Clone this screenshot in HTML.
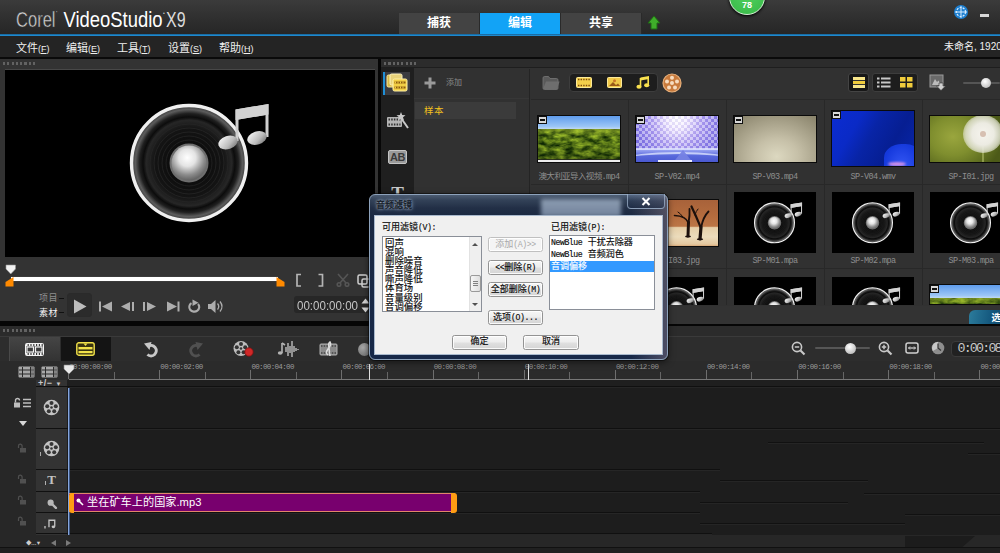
<!DOCTYPE html>
<html lang="zh-CN">
<head>
<meta charset="utf-8">
<title>Corel VideoStudio X9</title>
<style>
*{box-sizing:border-box;margin:0;padding:0}
html,body{width:1000px;height:553px;overflow:hidden;background:#1c1c1c}
body{position:relative;font-family:"Liberation Sans","Noto Sans CJK SC",sans-serif;color:#ddd;font-size:11px}
.a{position:absolute}
.nw{white-space:nowrap}
#titlebar{left:0;top:0;width:1000px;height:34px;background:linear-gradient(#3b3b3b,#303030 50%,#262626)}
#blueline{left:0;top:34px;width:1000px;height:3px;background:linear-gradient(#154f78,#1e8ad0 33%,#1e88cc 62%,#0f3a5a)}
#menubar{left:0;top:36px;width:1000px;height:21px;background:#242424}
#menugap{left:0;top:57px;width:1000px;height:2px;background:#0a0a0a}
.logo{left:15px;top:4px;font-size:21px;letter-spacing:-0.9px;color:#ececec;white-space:nowrap}
.logo b{font-weight:normal;color:#fff}
  .menu{top:39px;font-size:11px;color:#f0f0f0;white-space:nowrap}
.menu i{font-style:normal;font-size:9px}
.tab{top:13px;height:21px;width:81px;text-align:center;line-height:20px;font-size:12px;font-weight:bold;color:#fff;background:#434343;border-right:1px solid #2a2a2a}
.tab.sel{background:#12a3f6}
.dots{height:3px;width:34px;background:repeating-linear-gradient(90deg,#626262 0 2.2px,transparent 2.2px 4.3px)}
.lbl{font-family:"Liberation Mono","Noto Sans CJK SC",monospace;font-size:8.5px;line-height:10px;letter-spacing:-0.6px;color:#8e8e8e;text-align:center;white-space:nowrap;width:98px}
.thumb{border:1px solid #0a0a0a;overflow:hidden}
.vsep{width:1px;background:#282828}
.hsep{height:1px;background:#282828}
</style>
</head>
<body>
<div id="titlebar" class="a"></div><div id="blueline" class="a"></div><div id="menubar" class="a"></div><div id="menugap" class="a"></div>
<svg class="a" style="left:0;top:0" width="200" height="34" font-family="Liberation Sans, sans-serif" font-size="22"><text x="16" y="26.5" fill="#d6d6d6" textLength="39.5" lengthAdjust="spacingAndGlyphs" stroke="#3a3a3a" stroke-width="0.5">Corel</text><text x="56" y="15" fill="#ccc" font-size="6">&#8217;</text><text x="63.5" y="26.5" fill="#ffffff" textLength="99" lengthAdjust="spacingAndGlyphs">VideoStudio</text><text x="163" y="15" fill="#ccc" font-size="5">&#8226;</text><text x="166" y="26.5" fill="#dcdcdc" textLength="19.5" lengthAdjust="spacingAndGlyphs">X9</text></svg>
<div class="a menu" style="left:16px">文件<i>(<u>F</u>)</i></div>
<div class="a menu" style="left:66px">编辑<i>(<u>E</u>)</i></div>
<div class="a menu" style="left:117px">工具<i>(<u>T</u>)</i></div>
<div class="a menu" style="left:168px">设置<i>(<u>S</u>)</i></div>
<div class="a menu" style="left:219px">帮助<i>(<u>H</u>)</i></div>
<div class="a tab" style="left:399px">捕获</div>
<div class="a tab sel" style="left:480px">编辑</div>
<div class="a tab" style="left:561px">共享</div>
<svg class="a" style="left:647px;top:15px" width="14" height="16" viewBox="0 0 14 16"><path d="M7 1 L13 8 H10 V14 H4 V8 H1 Z" fill="#3fae2a" stroke="#1f6a14" stroke-width="1"/></svg>
<div class="a" style="left:729px;top:-21px;width:36px;height:36px;border-radius:50%;background:radial-gradient(circle at 50% 40%,#52d060,#36b846);border:1.5px solid #d4f0d4;box-shadow:0 1px 3px #000"></div>
<div class="a" style="left:729px;top:0px;width:36px;text-align:center;font-size:9px;font-weight:bold;color:#fff;line-height:10px">78</div>
<svg class="a" style="left:953px;top:4px" width="16" height="16" viewBox="0 0 16 16"><circle cx="8" cy="8" r="7" fill="#1d7fd0"/><circle cx="8" cy="8" r="4.5" fill="none" stroke="#d8ecff" stroke-width="1.2" stroke-dasharray="2 1.2"/><path d="M8 2V14M2 8H14" stroke="#d8ecff" stroke-width="1"/></svg>
<div class="a" style="left:980px;top:14px;width:9px;height:3px;background:#d8d8d8"></div>
<div class="a nw" style="left:944px;top:40px;font-size:10px;line-height:14px;color:#f0f0f0">未命名, 1920</div>
<div class="a" style="left:0;top:59px;width:378px;height:262.5px;background:#333"></div>
<div class="a dots" style="left:3px;top:62px"></div>
<div class="a" style="left:5px;top:69px;width:370px;height:188px;background:#000;border-top:1px solid #484848"></div>
<svg class="a" style="left:127px;top:100px" width="150" height="125" viewBox="0 0 150 125">
<defs>
<radialGradient id="sgA" cx="50%" cy="50%" r="50%"><stop offset="0" stop-color="#050505"/><stop offset="0.6" stop-color="#141414"/><stop offset="0.74" stop-color="#262626"/><stop offset="0.8" stop-color="#0c0c0c"/><stop offset="0.86" stop-color="#202020"/><stop offset="0.93" stop-color="#5c5c5c"/><stop offset="1" stop-color="#3a3a3a"/></radialGradient>
<radialGradient id="bgA" cx="45%" cy="35%" r="70%"><stop offset="0" stop-color="#ffffff"/><stop offset="0.35" stop-color="#e4e4e4"/><stop offset="0.7" stop-color="#8c8c8c"/><stop offset="1" stop-color="#555"/></radialGradient>
<linearGradient id="ngA" x1="0" y1="0" x2="1" y2="1"><stop offset="0" stop-color="#fff"/><stop offset="0.6" stop-color="#bbb"/><stop offset="1" stop-color="#666"/></linearGradient>
</defs>
<circle cx="62" cy="63" r="57.5" fill="url(#sgA)" stroke="#f0f0f0" stroke-width="3.4"/>
<circle cx="62" cy="63" r="43" fill="none" stroke="#262626" stroke-width="1"/>
<circle cx="62" cy="63" r="39" fill="none" stroke="#242424" stroke-width="1"/>
<circle cx="62" cy="63" r="35" fill="none" stroke="#232323" stroke-width="1"/>
<circle cx="62" cy="63" r="31" fill="none" stroke="#222" stroke-width="1"/>
<circle cx="62" cy="63" r="27" fill="none" stroke="#212121" stroke-width="1"/>
<circle cx="62" cy="63" r="23" fill="none" stroke="#202020" stroke-width="1"/>
<circle cx="62" cy="63" r="19.5" fill="#6e6e6e"/>
<circle cx="62" cy="63" r="17.5" fill="url(#bgA)"/>
<path d="M108.5 9.5 L141.5 4 L141.5 37 L138.5 37 L138.5 15 L111.5 19.5 L111.5 41 L108.5 41 Z" fill="#cfcfcf"/>
<path d="M108.5 9.5 L141.5 4 L141.5 14.5 L108.5 20 Z" fill="#d2d2d2"/>
<ellipse cx="101" cy="42.5" rx="10" ry="6.5" transform="rotate(-18 101 42.5)" fill="url(#ngA)"/>
<ellipse cx="130" cy="38" rx="10" ry="6.5" transform="rotate(-18 130 38)" fill="url(#ngA)"/>
</svg>
<svg class="a" style="left:5px;top:264px" width="12" height="11" viewBox="0 0 12 11"><path d="M1 1 H10.5 V5 L5.75 10 L1 5 Z" fill="#f2f2f2" stroke="#999" stroke-width="0.6"/></svg>
<div class="a" style="left:11px;top:276.5px;width:267px;height:4px;background:#fff;box-shadow:0 0 1px #888"></div>
<svg class="a" style="left:5px;top:277px" width="9" height="10" viewBox="0 0 9 10"><path d="M8.5 0 V9.5 H0.5 V5 Z" fill="#ff8a00"/></svg>
<svg class="a" style="left:276px;top:277px" width="9" height="10" viewBox="0 0 9 10"><path d="M0.5 0 V9.5 H8.5 V5 Z" fill="#ff8a00"/></svg>
<svg class="a" style="left:295px;top:273px" width="30" height="15" viewBox="0 0 30 15" fill="none" stroke="#b4b4b4" stroke-width="1.7"><path d="M6 1.5 H2 V13 H6"/><path d="M23.5 1.5 H27.5 V13 H23.5"/></svg>
<svg class="a" style="left:336px;top:273px" width="14" height="14" viewBox="0 0 14 14" fill="none" stroke="#555" stroke-width="1.6"><path d="M2 1 L10 10 M12 1 L4 10"/><circle cx="3" cy="11.5" r="1.8"/><circle cx="11" cy="11.5" r="1.8"/></svg>
<svg class="a" style="left:357px;top:273.5px" width="14" height="14" viewBox="0 0 14 14" fill="none" stroke="#cfcfcf" stroke-width="1.5"><rect x="1" y="1" width="9" height="9" rx="1.5"/><rect x="5" y="5" width="8" height="8" rx="1.5"/></svg>
<div class="a nw" style="left:39px;top:292.3px;font-size:9px;color:#8f8f8f;line-height:12px;letter-spacing:0.5px">项目</div>
<div class="a nw" style="left:39px;top:306.5px;font-size:9px;color:#f4f4f4;line-height:12px;letter-spacing:0.5px">素材</div>
<div class="a" style="left:59px;top:298px;width:5px;height:1px;background:#111"></div><div class="a" style="left:59px;top:312px;width:5px;height:1px;background:#111"></div>
<div class="a" style="left:67px;top:293px;width:25px;height:24px;background:#2b2b2b;border-radius:3px;border:1px solid #2a2a2a"></div>
<svg class="a" style="left:67px;top:293.5px" width="160" height="24" viewBox="0 0 160 24" fill="#adadad"><path d="M7 5.5 L19.5 12.5 L7 19.5 Z" fill="#bcbcbc"/><rect x="32" y="7.5" width="2" height="10"/><path d="M45 7.5 V17.5 L35 12.5 Z"/><path d="M63 8 V17 L54 12.5 Z"/><rect x="65" y="8" width="2" height="9"/><rect x="76" y="8" width="2" height="9"/><path d="M80 8 V17 L89 12.5 Z"/><path d="M100 7.5 V17.5 L110 12.5 Z"/><rect x="110.500" y="7.500" width="2" height="10"/><path d="M124.500 9.200 A5 4.600 0 1 0 131 10" fill="none" stroke="#adadad" stroke-width="2.100"/><path d="M125.500 5.500 L131.500 8.800 L125.500 12 Z"/><path d="M141 10 H144 L148.500 6 V19 L144 15 H141 Z"/><path d="M150.500 9.500 Q153 12.500 150.500 15.500" fill="none" stroke="#adadad" stroke-width="1.300"/><path d="M153 7.500 Q157 12.500 153 17.500" fill="none" stroke="#adadad" stroke-width="1.300"/></svg>
<div class="a" style="left:294px;top:296px;width:76px;height:17px;background:#272727;border-radius:3px"></div>
<div class="a nw" style="left:297px;top:298px;font-size:13.5px;color:#c4c4c4;line-height:15px;transform-origin:0 0;transform:scaleX(0.855)">00:00:00:00</div>
<svg class="a" style="left:361px;top:298px" width="9" height="15" viewBox="0 0 9 15" fill="#d8d8d8"><path d="M4.5 0.5 L8.5 5.5 H0.5 Z"/><path d="M4.5 14.5 L8.5 9.5 H0.5 Z"/></svg>
<div class="a" style="left:378px;top:59px;width:3px;height:267px;background:#060606"></div>
<div class="a" style="left:0;top:321px;width:1000px;height:5px;background:#060606"></div>
<div class="a" style="left:381px;top:59px;width:619px;height:262px;background:#313131"></div>
<div class="a" style="left:381px;top:59px;width:619px;height:9px;background:#2c2c2c;border-bottom:1px solid #1e1e1e"></div>
<div class="a dots" style="left:384px;top:62px"></div>
<div class="a" style="left:381px;top:68px;width:33px;height:255px;background:#1f1f1f"></div>
<div class="a" style="left:385px;top:72px;width:25px;height:23px;background:#3b3b3f"></div>
<div class="a" style="left:383px;top:72px;width:2px;height:23px;background:#1f8fd6"></div>
<svg class="a" style="left:386px;top:73px" width="22" height="20" viewBox="0 0 22 20"><rect x="1" y="2" width="13" height="12" rx="1.5" fill="#d9b945" stroke="#f7e9a0" stroke-width="1"/><rect x="4" y="1" width="12" height="11" rx="1.5" fill="#e8d27a" stroke="#fdf3c0" stroke-width="1"/><rect x="7" y="6" width="14" height="12" rx="1.5" fill="#f2cf45" stroke="#fff0a8" stroke-width="1"/><rect x="8.5" y="8.5" width="11" height="2" fill="#8a5a10"/><rect x="8.5" y="13.5" width="11" height="2" fill="#8a5a10"/><path d="M9 9.5h10M9 14.5h10" stroke="#f2cf45" stroke-width="2" stroke-dasharray="1 1.5"/></svg>
<svg class="a" style="left:386px;top:111px" width="24" height="19" viewBox="0 0 24 19"><rect x="1" y="6" width="15" height="10" rx="1" fill="#b4b4b4"/><path d="M2.5 8.5h12M2.5 13.5h12" stroke="#333" stroke-width="2" stroke-dasharray="1.5 1.2"/><path d="M15 7 L22 17" stroke="#c8c8c8" stroke-width="2"/><path d="M15 1 L16.2 4 L19.5 4.2 L17 6.3 L18 9.5 L15 7.7 L12 9.5 L13 6.3 L10.5 4.2 L13.8 4 Z" fill="#c9c9c9"/></svg>
<div class="a" style="left:388px;top:150px;width:19px;height:14px;background:#9a9a9a;border-radius:2px;border:1px solid #c4c4c4"></div><div class="a nw" style="left:388px;top:150px;width:19px;height:14px;text-align:center;line-height:14px;font-size:11px;font-weight:bold;color:#3a3a3a;letter-spacing:-0.5px">AB</div>
<div class="a nw" style="left:389px;top:184px;width:17px;text-align:center;font-size:19px;font-weight:bold;font-family:'Liberation Serif',serif;color:#c8c8c8;line-height:20px">T</div>
<div class="a" style="left:414px;top:69px;width:115px;height:254px;background:#313131"></div>
<div class="a" style="left:414px;top:98px;width:115px;height:1px;background:#373737"></div>
<svg class="a" style="left:424px;top:77px" width="12" height="12" viewBox="0 0 12 12"><path d="M4.5 0.5h3v4h4v3h-4v4h-3v-4h-4v-3h4z" fill="#9a9a9a"/></svg>
<div class="a nw" style="left:446px;top:78px;font-size:8px;color:#8a8a8a;line-height:10px">添加</div>
<div class="a" style="left:415px;top:102px;width:101px;height:17px;background:#3b3b3b"></div>
<div class="a nw" style="left:424px;top:104px;font-size:9.5px;color:#f2c01e;line-height:13px;letter-spacing:0.5px">样本</div>
<div class="a" style="left:529px;top:69px;width:1px;height:254px;background:#242424"></div>
<svg class="a" style="left:542px;top:75px" width="18" height="16" viewBox="0 0 18 16"><path d="M1 3 Q1 1.5 2.5 1.5 H6.5 L8 3.5 H14.5 Q16 3.5 16 5 V13 Q16 14.5 14.5 14.5 H2.5 Q1 14.5 1 13 Z" fill="#5a5a5a" stroke="#777" stroke-width="0.8"/><path d="M1 14 L4 6.5 H17.5 L15 14.5 Z" fill="#6e6e6e"/></svg>
<div class="a" style="left:569px;top:73px;width:89px;height:19px;background:#1d1d1d;border:1px solid #3d3d3d;border-radius:4px"></div>
<svg class="a" style="left:576px;top:77px" width="16" height="11" viewBox="0 0 16 11"><rect x="0.5" y="0.5" width="15" height="10" rx="1" fill="#f3cf4a" stroke="#fbe99a"/><path d="M2 2.5h12M2 8.5h12" stroke="#7a4a10" stroke-width="1.6" stroke-dasharray="1.4 1.2"/></svg>
<svg class="a" style="left:607px;top:77px" width="15" height="11" viewBox="0 0 15 11"><rect x="0.5" y="0.5" width="14" height="10" rx="1" fill="#f0c848" stroke="#fbe99a"/><path d="M2 9 L6 5 L9 8 L11 6.5 L13 9 Z" fill="#9a5a18"/><circle cx="7.5" cy="3.8" r="1.5" fill="#c8782a"/></svg>
<svg class="a" style="left:636px;top:75px" width="15" height="15" viewBox="0 0 15 15"><path d="M4.5 2.5 L13 1 V4 L4.5 5.5 Z" fill="#f8e04e"/><path d="M4.5 3 V11.5 M12.2 2 V10" stroke="#f8e04e" stroke-width="1.6" fill="none"/><ellipse cx="3" cy="11.8" rx="2.6" ry="2" fill="#f8e04e"/><ellipse cx="10.7" cy="10.3" rx="2.6" ry="2" fill="#f8e04e"/></svg>
<svg class="a" style="left:662px;top:73px" width="20" height="20" viewBox="0 0 20 20"><circle cx="10" cy="10" r="9" fill="#c87a3c" stroke="#e9b07a" stroke-width="1.2"/><circle cx="10" cy="10" r="2" fill="#f6dcc0"/><circle cx="10" cy="4.7" r="2" fill="#f6dcc0"/><circle cx="5" cy="8.5" r="2" fill="#f6dcc0"/><circle cx="15" cy="8.5" r="2" fill="#f6dcc0"/><circle cx="7" cy="14.5" r="2" fill="#f6dcc0"/><circle cx="13" cy="14.5" r="2" fill="#f6dcc0"/></svg>
<div class="a" style="left:848px;top:73px;width:21px;height:19px;background:#171717;border:1px solid #444;border-radius:3px"></div>
<div class="a" style="left:853px;top:77px;width:12px;height:11px;background:#f0cc3c;border-top:3px solid #f8e68a;border-bottom:3px solid #f8e68a"></div><div class="a" style="left:853px;top:80px;width:12px;height:1px;background:#333"></div><div class="a" style="left:853px;top:84px;width:12px;height:1px;background:#333"></div>
<div class="a" style="left:872px;top:73px;width:46px;height:19px;background:#1d1d1d;border:1px solid #3d3d3d;border-radius:3px"></div>
<svg class="a" style="left:877px;top:77px" width="14" height="11" viewBox="0 0 14 11" fill="#c8c8c8"><rect x="0" y="0.5" width="2.5" height="2"/><rect x="4" y="0.5" width="9.5" height="2"/><rect x="0" y="4.5" width="2.5" height="2"/><rect x="4" y="4.5" width="9.5" height="2"/><rect x="0" y="8.5" width="2.5" height="2"/><rect x="4" y="8.5" width="9.5" height="2"/></svg>
<svg class="a" style="left:900px;top:77px" width="13" height="11" viewBox="0 0 13 11" fill="#f0cc3c"><rect x="0" y="0" width="5.5" height="4.5"/><rect x="7" y="0" width="5.5" height="4.5"/><rect x="0" y="6" width="5.5" height="4.5"/><rect x="7" y="6" width="5.5" height="4.5"/></svg>
<svg class="a" style="left:929px;top:74px" width="17" height="17" viewBox="0 0 17 17"><rect x="1" y="1" width="13" height="12" fill="#6a6a6a" stroke="#9a9a9a"/><path d="M3 11 L6 5 L8 8 L9.5 6.5 L12 11Z" fill="#bbb"/><path d="M10 9 h4 v3 h2.5 l-4.5 4.5 l-4.5 -4.5 h2.5z" fill="#cfcfcf" stroke="#333" stroke-width="0.6"/></svg>
<div class="a" style="left:963px;top:82px;width:37px;height:2px;background:#555;border-radius:1px"></div>
<div class="a" style="left:981px;top:78px;width:10px;height:10px;border-radius:50%;background:radial-gradient(circle at 40% 35%,#fff,#aaa)"></div>
<div class="a hsep" style="left:531px;top:99px;width:469px"></div>
<div class="a vsep" style="left:628px;top:100px;height:205px"></div>
<div class="a vsep" style="left:726px;top:100px;height:205px"></div>
<div class="a vsep" style="left:824px;top:100px;height:205px"></div>
<div class="a vsep" style="left:922px;top:100px;height:205px"></div>
<div class="a hsep" style="left:531px;top:184px;width:469px"></div>
<div class="a hsep" style="left:531px;top:268px;width:469px"></div>
<div class="a thumb" style="left:537px;top:115px;width:84px;height:48px;background:#3a5a14"><svg class="a" style="left:0;top:0" width="82" height="46" viewBox="0 0 82 46"><defs><filter id="tra" x="0" y="0" width="100%" height="100%" color-interpolation-filters="sRGB"><feTurbulence type="fractalNoise" baseFrequency="0.11 0.22" numOctaves="3" seed="4"/><feColorMatrix type="matrix" values="1.1 0 0 0 -0.24  1.15 0 0 0 -0.15  0.3 0 0 0 -0.07  0 0 0 0 1"/></filter><linearGradient id="ska" x1="0" y1="0" x2="0" y2="1"><stop offset="0" stop-color="#5f9cec"/><stop offset="0.75" stop-color="#9cc6f6"/><stop offset="1" stop-color="#cfe0f0"/></linearGradient><linearGradient id="sha" x1="0" y1="0" x2="0" y2="1"><stop offset="0" stop-color="#9ab030" stop-opacity=".55"/><stop offset="0.3" stop-color="#6a8a20" stop-opacity=".1"/><stop offset="1" stop-color="#1a2a08" stop-opacity=".45"/></linearGradient></defs><rect width="82" height="14" fill="url(#ska)"/><rect y="13" width="82" height="33" filter="url(#tra)"/><rect y="13" width="82" height="33" fill="url(#sha)"/><rect y="43.2" width="82" height="0.8" fill="#222"/><rect y="44" width="82" height="2" fill="#ececec"/></svg><div class="a" style="left:0;top:0;width:9px;height:8px;background:#111"></div><div class="a" style="left:1px;top:1px;width:7px;height:6px;border:1px solid #d8d8d8;border-top:2px solid #d8d8d8;border-bottom:2px solid #d8d8d8;background:#111"></div></div>
<div class="a thumb" style="left:635px;top:115px;width:84px;height:48px;background:radial-gradient(ellipse at 50% 5%,#ffffff 0%,#f0e8ff 18%,#b4a4f2 42%,#8478e6 70%,#6c66da 100%)"><div class="a" style="left:0;top:0;width:84px;height:34px;background:repeating-conic-gradient(rgba(255,255,255,.42) 0 25%,rgba(90,70,200,.12) 0 50%) 0 0/6px 6px"></div><div class="a" style="left:0;top:33px;width:84px;height:15px;background:linear-gradient(#a4aef6,#5868dc 45%,#4654cc)"></div><div class="a" style="left:0;top:32px;width:84px;height:2px;background:#e4e8ff;opacity:.75"></div><div class="a" style="left:-10px;top:36px;width:104px;height:14px;border-top:2px solid rgba(225,232,255,.75);border-radius:50%"></div><div class="a" style="left:36px;top:34px;width:0;height:0;border-left:11px solid transparent;border-right:11px solid transparent;border-bottom:14px solid #7682e4;opacity:.95"></div><div class="a" style="left:22px;top:44px;width:34px;height:2px;background:#eef0ff"></div><div class="a" style="left:0;top:0;width:9px;height:8px;background:#111"></div><div class="a" style="left:1px;top:1px;width:7px;height:6px;border:1px solid #d8d8d8;border-top:2px solid #d8d8d8;border-bottom:2px solid #d8d8d8;background:#111"></div></div>
<div class="a thumb" style="left:733px;top:115px;width:84px;height:48px;background:radial-gradient(ellipse 75% 110% at 52% 88%,#dcd8c0 0%,#c6c0a8 35%,#a6a088 70%,#8a846c 100%)"><div class="a" style="left:0;top:0;width:9px;height:8px;background:#111"></div><div class="a" style="left:1px;top:1px;width:7px;height:6px;border:1px solid #d8d8d8;border-top:2px solid #d8d8d8;border-bottom:2px solid #d8d8d8;background:#111"></div></div>
<div class="a thumb" style="left:831px;top:110px;width:84px;height:57px;background:linear-gradient(120deg,#0b2cd2 0%,#0a2ac6 28%,#0824a6 46%,#061e92 70%,#0826ac 100%)"><div class="a" style="left:52px;top:33px;width:36px;height:28px;border-radius:50% 40% 0 0;background:radial-gradient(ellipse at 50% 95%,#3a5cf8,#1438dc 75%)"></div><div class="a" style="left:56px;top:51px;width:18px;height:4px;border-radius:50%;background:#d090e8;filter:blur(1.2px)"></div><div class="a" style="left:0;top:0;width:9px;height:8px;background:#111"></div><div class="a" style="left:1px;top:1px;width:7px;height:6px;border:1px solid #d8d8d8;border-top:2px solid #d8d8d8;border-bottom:2px solid #d8d8d8;background:#111"></div></div>
<div class="a thumb" style="left:929px;top:115px;width:84px;height:48px;background:radial-gradient(ellipse 60% 90% at 28% 45%,#9aa63e 0%,#7f8e2e 45%,#5f6e20 80%,#4c5a18 100%)"><div class="a" style="left:52px;top:30px;width:2px;height:18px;background:#a4b060;opacity:.7"></div><div class="a" style="left:33px;top:-1px;width:40px;height:38px;border-radius:50%;background:radial-gradient(circle,#f6f4ee 0%,#ecebe2 40%,rgba(232,232,220,.8) 62%,rgba(220,225,190,.35) 82%,rgba(200,210,150,0) 100%)"></div><div class="a" style="left:50px;top:15px;width:6px;height:6px;border-radius:50%;background:rgba(190,150,130,.55)"></div></div>
<div class="a lbl" style="left:530px;top:171.5px">澳大利亚导入视频.mp4</div>
<div class="a lbl" style="left:628px;top:171.5px">SP-V02.mp4</div>
<div class="a lbl" style="left:726px;top:171.5px">SP-V03.mp4</div>
<div class="a lbl" style="left:824px;top:171.5px">SP-V04.wmv</div>
<div class="a lbl" style="left:922px;top:171.5px">SP-I01.jpg</div>
<div class="a thumb" style="left:635px;top:199px;width:84px;height:48px;background:linear-gradient(#a8623a 0%,#b46c3e 35%,#bc7646 57%,#e6cfa8 60%,#ecdcbc 80%,#e4c8a0 96%,#d8a878 100%)"><svg class="a" style="left:0;top:0" width="82" height="46" viewBox="0 0 82 46" fill="none" stroke="#1c100c" stroke-linecap="round"><path d="M52 36 L52.5 22" stroke-width="3"/><path d="M52.5 23 Q50 16 38.5 15.5" stroke-width="1.6"/><path d="M52.5 23 Q54 15 53.5 9" stroke-width="1.8"/><path d="M47 17 Q44 13 42 12" stroke-width="1"/><path d="M64 39 L65 27" stroke-width="3.2"/><path d="M65 28 Q60 16 55.5 6.5" stroke-width="2.2"/><path d="M65 28 Q67 17 72.5 11.5" stroke-width="1.8"/><path d="M59 15 Q60 11 62 9" stroke-width="1"/><ellipse cx="52" cy="36.5" rx="3" ry="1" fill="#1c100c" stroke="none"/><ellipse cx="64" cy="39.3" rx="3.2" ry="1" fill="#1c100c" stroke="none"/></svg></div>
<div class="a" style="left:734px;top:192px;width:82px;height:61px;background:#000;overflow:hidden"><svg class="a" style="left:19px;top:9px" width="52" height="43.3333" viewBox="0 0 150 125">
<defs>
<radialGradient id="sgB" cx="50%" cy="50%" r="50%"><stop offset="0" stop-color="#050505"/><stop offset="0.6" stop-color="#141414"/><stop offset="0.74" stop-color="#262626"/><stop offset="0.8" stop-color="#0c0c0c"/><stop offset="0.86" stop-color="#202020"/><stop offset="0.93" stop-color="#5c5c5c"/><stop offset="1" stop-color="#3a3a3a"/></radialGradient>
<radialGradient id="bgB" cx="45%" cy="35%" r="70%"><stop offset="0" stop-color="#ffffff"/><stop offset="0.35" stop-color="#e4e4e4"/><stop offset="0.7" stop-color="#8c8c8c"/><stop offset="1" stop-color="#555"/></radialGradient>
<linearGradient id="ngB" x1="0" y1="0" x2="1" y2="1"><stop offset="0" stop-color="#fff"/><stop offset="0.6" stop-color="#bbb"/><stop offset="1" stop-color="#666"/></linearGradient>
</defs>
<circle cx="62" cy="63" r="57.5" fill="url(#sgB)" stroke="#f0f0f0" stroke-width="3.4"/>
<circle cx="62" cy="63" r="43" fill="none" stroke="#262626" stroke-width="1"/>
<circle cx="62" cy="63" r="39" fill="none" stroke="#242424" stroke-width="1"/>
<circle cx="62" cy="63" r="35" fill="none" stroke="#232323" stroke-width="1"/>
<circle cx="62" cy="63" r="31" fill="none" stroke="#222" stroke-width="1"/>
<circle cx="62" cy="63" r="27" fill="none" stroke="#212121" stroke-width="1"/>
<circle cx="62" cy="63" r="23" fill="none" stroke="#202020" stroke-width="1"/>
<circle cx="62" cy="63" r="19.5" fill="#6e6e6e"/>
<circle cx="62" cy="63" r="17.5" fill="url(#bgB)"/>
<path d="M108.5 9.5 L141.5 4 L141.5 37 L138.5 37 L138.5 15 L111.5 19.5 L111.5 41 L108.5 41 Z" fill="#cfcfcf"/>
<path d="M108.5 9.5 L141.5 4 L141.5 14.5 L108.5 20 Z" fill="#d2d2d2"/>
<ellipse cx="101" cy="42.5" rx="10" ry="6.5" transform="rotate(-18 101 42.5)" fill="url(#ngB)"/>
<ellipse cx="130" cy="38" rx="10" ry="6.5" transform="rotate(-18 130 38)" fill="url(#ngB)"/>
</svg>
</div>
<div class="a" style="left:832px;top:192px;width:82px;height:61px;background:#000;overflow:hidden"><svg class="a" style="left:19px;top:9px" width="52" height="43.3333" viewBox="0 0 150 125">
<defs>
<radialGradient id="sgC" cx="50%" cy="50%" r="50%"><stop offset="0" stop-color="#050505"/><stop offset="0.6" stop-color="#141414"/><stop offset="0.74" stop-color="#262626"/><stop offset="0.8" stop-color="#0c0c0c"/><stop offset="0.86" stop-color="#202020"/><stop offset="0.93" stop-color="#5c5c5c"/><stop offset="1" stop-color="#3a3a3a"/></radialGradient>
<radialGradient id="bgC" cx="45%" cy="35%" r="70%"><stop offset="0" stop-color="#ffffff"/><stop offset="0.35" stop-color="#e4e4e4"/><stop offset="0.7" stop-color="#8c8c8c"/><stop offset="1" stop-color="#555"/></radialGradient>
<linearGradient id="ngC" x1="0" y1="0" x2="1" y2="1"><stop offset="0" stop-color="#fff"/><stop offset="0.6" stop-color="#bbb"/><stop offset="1" stop-color="#666"/></linearGradient>
</defs>
<circle cx="62" cy="63" r="57.5" fill="url(#sgC)" stroke="#f0f0f0" stroke-width="3.4"/>
<circle cx="62" cy="63" r="43" fill="none" stroke="#262626" stroke-width="1"/>
<circle cx="62" cy="63" r="39" fill="none" stroke="#242424" stroke-width="1"/>
<circle cx="62" cy="63" r="35" fill="none" stroke="#232323" stroke-width="1"/>
<circle cx="62" cy="63" r="31" fill="none" stroke="#222" stroke-width="1"/>
<circle cx="62" cy="63" r="27" fill="none" stroke="#212121" stroke-width="1"/>
<circle cx="62" cy="63" r="23" fill="none" stroke="#202020" stroke-width="1"/>
<circle cx="62" cy="63" r="19.5" fill="#6e6e6e"/>
<circle cx="62" cy="63" r="17.5" fill="url(#bgC)"/>
<path d="M108.5 9.5 L141.5 4 L141.5 37 L138.5 37 L138.5 15 L111.5 19.5 L111.5 41 L108.5 41 Z" fill="#cfcfcf"/>
<path d="M108.5 9.5 L141.5 4 L141.5 14.5 L108.5 20 Z" fill="#d2d2d2"/>
<ellipse cx="101" cy="42.5" rx="10" ry="6.5" transform="rotate(-18 101 42.5)" fill="url(#ngC)"/>
<ellipse cx="130" cy="38" rx="10" ry="6.5" transform="rotate(-18 130 38)" fill="url(#ngC)"/>
</svg>
</div>
<div class="a" style="left:930px;top:192px;width:82px;height:61px;background:#000;overflow:hidden"><svg class="a" style="left:19px;top:9px" width="52" height="43.3333" viewBox="0 0 150 125">
<defs>
<radialGradient id="sgD" cx="50%" cy="50%" r="50%"><stop offset="0" stop-color="#050505"/><stop offset="0.6" stop-color="#141414"/><stop offset="0.74" stop-color="#262626"/><stop offset="0.8" stop-color="#0c0c0c"/><stop offset="0.86" stop-color="#202020"/><stop offset="0.93" stop-color="#5c5c5c"/><stop offset="1" stop-color="#3a3a3a"/></radialGradient>
<radialGradient id="bgD" cx="45%" cy="35%" r="70%"><stop offset="0" stop-color="#ffffff"/><stop offset="0.35" stop-color="#e4e4e4"/><stop offset="0.7" stop-color="#8c8c8c"/><stop offset="1" stop-color="#555"/></radialGradient>
<linearGradient id="ngD" x1="0" y1="0" x2="1" y2="1"><stop offset="0" stop-color="#fff"/><stop offset="0.6" stop-color="#bbb"/><stop offset="1" stop-color="#666"/></linearGradient>
</defs>
<circle cx="62" cy="63" r="57.5" fill="url(#sgD)" stroke="#f0f0f0" stroke-width="3.4"/>
<circle cx="62" cy="63" r="43" fill="none" stroke="#262626" stroke-width="1"/>
<circle cx="62" cy="63" r="39" fill="none" stroke="#242424" stroke-width="1"/>
<circle cx="62" cy="63" r="35" fill="none" stroke="#232323" stroke-width="1"/>
<circle cx="62" cy="63" r="31" fill="none" stroke="#222" stroke-width="1"/>
<circle cx="62" cy="63" r="27" fill="none" stroke="#212121" stroke-width="1"/>
<circle cx="62" cy="63" r="23" fill="none" stroke="#202020" stroke-width="1"/>
<circle cx="62" cy="63" r="19.5" fill="#6e6e6e"/>
<circle cx="62" cy="63" r="17.5" fill="url(#bgD)"/>
<path d="M108.5 9.5 L141.5 4 L141.5 37 L138.5 37 L138.5 15 L111.5 19.5 L111.5 41 L108.5 41 Z" fill="#cfcfcf"/>
<path d="M108.5 9.5 L141.5 4 L141.5 14.5 L108.5 20 Z" fill="#d2d2d2"/>
<ellipse cx="101" cy="42.5" rx="10" ry="6.5" transform="rotate(-18 101 42.5)" fill="url(#ngD)"/>
<ellipse cx="130" cy="38" rx="10" ry="6.5" transform="rotate(-18 130 38)" fill="url(#ngD)"/>
</svg>
</div>
<div class="a lbl" style="left:628px;top:256px">SP-I03.jpg</div>
<div class="a lbl" style="left:726px;top:256px">SP-M01.mpa</div>
<div class="a lbl" style="left:824px;top:256px">SP-M02.mpa</div>
<div class="a lbl" style="left:922px;top:256px">SP-M03.mpa</div>
<div class="a" style="left:636px;top:277px;width:82px;height:28px;background:#000;overflow:hidden"><svg class="a" style="left:19px;top:9px" width="52" height="43.3333" viewBox="0 0 150 125">
<defs>
<radialGradient id="sgE" cx="50%" cy="50%" r="50%"><stop offset="0" stop-color="#050505"/><stop offset="0.6" stop-color="#141414"/><stop offset="0.74" stop-color="#262626"/><stop offset="0.8" stop-color="#0c0c0c"/><stop offset="0.86" stop-color="#202020"/><stop offset="0.93" stop-color="#5c5c5c"/><stop offset="1" stop-color="#3a3a3a"/></radialGradient>
<radialGradient id="bgE" cx="45%" cy="35%" r="70%"><stop offset="0" stop-color="#ffffff"/><stop offset="0.35" stop-color="#e4e4e4"/><stop offset="0.7" stop-color="#8c8c8c"/><stop offset="1" stop-color="#555"/></radialGradient>
<linearGradient id="ngE" x1="0" y1="0" x2="1" y2="1"><stop offset="0" stop-color="#fff"/><stop offset="0.6" stop-color="#bbb"/><stop offset="1" stop-color="#666"/></linearGradient>
</defs>
<circle cx="62" cy="63" r="57.5" fill="url(#sgE)" stroke="#f0f0f0" stroke-width="3.4"/>
<circle cx="62" cy="63" r="43" fill="none" stroke="#262626" stroke-width="1"/>
<circle cx="62" cy="63" r="39" fill="none" stroke="#242424" stroke-width="1"/>
<circle cx="62" cy="63" r="35" fill="none" stroke="#232323" stroke-width="1"/>
<circle cx="62" cy="63" r="31" fill="none" stroke="#222" stroke-width="1"/>
<circle cx="62" cy="63" r="27" fill="none" stroke="#212121" stroke-width="1"/>
<circle cx="62" cy="63" r="23" fill="none" stroke="#202020" stroke-width="1"/>
<circle cx="62" cy="63" r="19.5" fill="#6e6e6e"/>
<circle cx="62" cy="63" r="17.5" fill="url(#bgE)"/>
<path d="M108.5 9.5 L141.5 4 L141.5 37 L138.5 37 L138.5 15 L111.5 19.5 L111.5 41 L108.5 41 Z" fill="#cfcfcf"/>
<path d="M108.5 9.5 L141.5 4 L141.5 14.5 L108.5 20 Z" fill="#d2d2d2"/>
<ellipse cx="101" cy="42.5" rx="10" ry="6.5" transform="rotate(-18 101 42.5)" fill="url(#ngE)"/>
<ellipse cx="130" cy="38" rx="10" ry="6.5" transform="rotate(-18 130 38)" fill="url(#ngE)"/>
</svg>
</div>
<div class="a" style="left:734px;top:277px;width:82px;height:28px;background:#000;overflow:hidden"><svg class="a" style="left:19px;top:9px" width="52" height="43.3333" viewBox="0 0 150 125">
<defs>
<radialGradient id="sgF" cx="50%" cy="50%" r="50%"><stop offset="0" stop-color="#050505"/><stop offset="0.6" stop-color="#141414"/><stop offset="0.74" stop-color="#262626"/><stop offset="0.8" stop-color="#0c0c0c"/><stop offset="0.86" stop-color="#202020"/><stop offset="0.93" stop-color="#5c5c5c"/><stop offset="1" stop-color="#3a3a3a"/></radialGradient>
<radialGradient id="bgF" cx="45%" cy="35%" r="70%"><stop offset="0" stop-color="#ffffff"/><stop offset="0.35" stop-color="#e4e4e4"/><stop offset="0.7" stop-color="#8c8c8c"/><stop offset="1" stop-color="#555"/></radialGradient>
<linearGradient id="ngF" x1="0" y1="0" x2="1" y2="1"><stop offset="0" stop-color="#fff"/><stop offset="0.6" stop-color="#bbb"/><stop offset="1" stop-color="#666"/></linearGradient>
</defs>
<circle cx="62" cy="63" r="57.5" fill="url(#sgF)" stroke="#f0f0f0" stroke-width="3.4"/>
<circle cx="62" cy="63" r="43" fill="none" stroke="#262626" stroke-width="1"/>
<circle cx="62" cy="63" r="39" fill="none" stroke="#242424" stroke-width="1"/>
<circle cx="62" cy="63" r="35" fill="none" stroke="#232323" stroke-width="1"/>
<circle cx="62" cy="63" r="31" fill="none" stroke="#222" stroke-width="1"/>
<circle cx="62" cy="63" r="27" fill="none" stroke="#212121" stroke-width="1"/>
<circle cx="62" cy="63" r="23" fill="none" stroke="#202020" stroke-width="1"/>
<circle cx="62" cy="63" r="19.5" fill="#6e6e6e"/>
<circle cx="62" cy="63" r="17.5" fill="url(#bgF)"/>
<path d="M108.5 9.5 L141.5 4 L141.5 37 L138.5 37 L138.5 15 L111.5 19.5 L111.5 41 L108.5 41 Z" fill="#cfcfcf"/>
<path d="M108.5 9.5 L141.5 4 L141.5 14.5 L108.5 20 Z" fill="#d2d2d2"/>
<ellipse cx="101" cy="42.5" rx="10" ry="6.5" transform="rotate(-18 101 42.5)" fill="url(#ngF)"/>
<ellipse cx="130" cy="38" rx="10" ry="6.5" transform="rotate(-18 130 38)" fill="url(#ngF)"/>
</svg>
</div>
<div class="a" style="left:832px;top:277px;width:82px;height:28px;background:#000;overflow:hidden"><svg class="a" style="left:19px;top:9px" width="52" height="43.3333" viewBox="0 0 150 125">
<defs>
<radialGradient id="sgG" cx="50%" cy="50%" r="50%"><stop offset="0" stop-color="#050505"/><stop offset="0.6" stop-color="#141414"/><stop offset="0.74" stop-color="#262626"/><stop offset="0.8" stop-color="#0c0c0c"/><stop offset="0.86" stop-color="#202020"/><stop offset="0.93" stop-color="#5c5c5c"/><stop offset="1" stop-color="#3a3a3a"/></radialGradient>
<radialGradient id="bgG" cx="45%" cy="35%" r="70%"><stop offset="0" stop-color="#ffffff"/><stop offset="0.35" stop-color="#e4e4e4"/><stop offset="0.7" stop-color="#8c8c8c"/><stop offset="1" stop-color="#555"/></radialGradient>
<linearGradient id="ngG" x1="0" y1="0" x2="1" y2="1"><stop offset="0" stop-color="#fff"/><stop offset="0.6" stop-color="#bbb"/><stop offset="1" stop-color="#666"/></linearGradient>
</defs>
<circle cx="62" cy="63" r="57.5" fill="url(#sgG)" stroke="#f0f0f0" stroke-width="3.4"/>
<circle cx="62" cy="63" r="43" fill="none" stroke="#262626" stroke-width="1"/>
<circle cx="62" cy="63" r="39" fill="none" stroke="#242424" stroke-width="1"/>
<circle cx="62" cy="63" r="35" fill="none" stroke="#232323" stroke-width="1"/>
<circle cx="62" cy="63" r="31" fill="none" stroke="#222" stroke-width="1"/>
<circle cx="62" cy="63" r="27" fill="none" stroke="#212121" stroke-width="1"/>
<circle cx="62" cy="63" r="23" fill="none" stroke="#202020" stroke-width="1"/>
<circle cx="62" cy="63" r="19.5" fill="#6e6e6e"/>
<circle cx="62" cy="63" r="17.5" fill="url(#bgG)"/>
<path d="M108.5 9.5 L141.5 4 L141.5 37 L138.5 37 L138.5 15 L111.5 19.5 L111.5 41 L108.5 41 Z" fill="#cfcfcf"/>
<path d="M108.5 9.5 L141.5 4 L141.5 14.5 L108.5 20 Z" fill="#d2d2d2"/>
<ellipse cx="101" cy="42.5" rx="10" ry="6.5" transform="rotate(-18 101 42.5)" fill="url(#ngG)"/>
<ellipse cx="130" cy="38" rx="10" ry="6.5" transform="rotate(-18 130 38)" fill="url(#ngG)"/>
</svg>
</div>
<div class="a thumb" style="left:929px;top:284px;width:84px;height:21px;background:#3a5a14"><svg class="a" style="left:0;top:0" width="82" height="46" viewBox="0 0 82 46"><defs><filter id="trb" x="0" y="0" width="100%" height="100%" color-interpolation-filters="sRGB"><feTurbulence type="fractalNoise" baseFrequency="0.11 0.22" numOctaves="3" seed="9"/><feColorMatrix type="matrix" values="1.1 0 0 0 -0.24  1.15 0 0 0 -0.15  0.3 0 0 0 -0.07  0 0 0 0 1"/></filter><linearGradient id="skb" x1="0" y1="0" x2="0" y2="1"><stop offset="0" stop-color="#5f9cec"/><stop offset="0.75" stop-color="#9cc6f6"/><stop offset="1" stop-color="#cfe0f0"/></linearGradient><linearGradient id="shb" x1="0" y1="0" x2="0" y2="1"><stop offset="0" stop-color="#9ab030" stop-opacity=".55"/><stop offset="0.3" stop-color="#6a8a20" stop-opacity=".1"/><stop offset="1" stop-color="#1a2a08" stop-opacity=".45"/></linearGradient></defs><rect width="82" height="14" fill="url(#skb)"/><rect y="13" width="82" height="33" filter="url(#trb)"/><rect y="13" width="82" height="33" fill="url(#shb)"/></svg><div class="a" style="left:0;top:0;width:9px;height:8px;background:#111"></div><div class="a" style="left:1px;top:1px;width:7px;height:6px;border:1px solid #d8d8d8;border-top:2px solid #d8d8d8;border-bottom:2px solid #d8d8d8;background:#111"></div></div>
<div class="a" style="left:381px;top:305.5px;width:619px;height:18px;background:#333"></div>
<div class="a" style="left:969px;top:309.5px;width:36px;height:14px;border-radius:6px 0 0 0;background:linear-gradient(100deg,#2c7c9c,#14587e 60%,#0e4a6c)"></div>
<div class="a nw" style="left:991.5px;top:310.5px;font-size:9.5px;font-weight:bold;color:#fff;line-height:13px">选项</div>
<div class="a" style="left:0;top:326px;width:1000px;height:10px;background:#2b2b2b"></div>
<div class="a dots" style="left:3px;top:329px"></div>
<div class="a" style="left:0;top:336px;width:1000px;height:25px;background:#2d2d2d;border-top:1px solid #3a3a3a"></div>
<div class="a" style="left:9px;top:337px;width:51px;height:24px;background:linear-gradient(#454545,#333);border-left:1px solid #4a4a4a"></div>
<div class="a" style="left:61px;top:337px;width:50px;height:24px;background:#141414"></div>
<svg class="a" style="left:25px;top:343px" width="19" height="13" viewBox="0 0 19 13"><rect x="0.5" y="0.5" width="18" height="12" rx="1" fill="none" stroke="#f4f4f4" stroke-width="1"/><path d="M1 2h17M1 11h17" stroke="#f4f4f4" stroke-width="2.4" stroke-dasharray="1.6 1.2"/><rect x="2" y="4" width="6.5" height="5" fill="none" stroke="#f4f4f4" stroke-width="1.2"/><rect x="10.5" y="4" width="6.5" height="5" fill="none" stroke="#f4f4f4" stroke-width="1.2"/></svg>
<svg class="a" style="left:76px;top:342px" width="19" height="14" viewBox="0 0 19 14"><rect x="0.8" y="0.8" width="17.4" height="12.4" rx="2" fill="#3a3410" stroke="#f2e24a" stroke-width="1.4"/><rect x="2.5" y="5" width="14" height="2.4" fill="#f2e24a"/><rect x="2.5" y="9" width="14" height="2.2" fill="#f2e24a"/><path d="M7.5 1.5 h4 l-2 2.6z" fill="#f2e24a"/></svg>
<svg class="a" style="left:143px;top:340px" width="16" height="18" viewBox="0 0 16 18"><path d="M5 6.5 A5.2 5.2 0 1 1 4.5 14.5" fill="none" stroke="#c8c8c8" stroke-width="3"/><path d="M1 3.5 L8.5 2 L6.5 10 Z" fill="#c8c8c8"/></svg>
<svg class="a" style="left:188px;top:340px" width="16" height="18" viewBox="0 0 16 18"><path d="M11 6.5 A5.2 5.2 0 1 0 11.5 14.5" fill="none" stroke="#505050" stroke-width="3"/><path d="M15 3.5 L7.5 2 L9.5 10 Z" fill="#505050"/></svg>
<svg class="a" style="left:233px;top:340px" width="22" height="18" viewBox="0 0 22 18"><circle cx="8" cy="8.5" r="7.5" fill="#bdbdbd"/><circle cx="8" cy="8.5" r="1.3" fill="#333"/><circle cx="8" cy="4" r="2" fill="#333"/><circle cx="3.8" cy="7.2" r="2" fill="#333"/><circle cx="12.2" cy="7.2" r="2" fill="#333"/><circle cx="5.4" cy="12.2" r="2" fill="#333"/><circle cx="10.6" cy="12.2" r="2" fill="#333"/><circle cx="16" cy="12" r="4.2" fill="#d02828" stroke="#7a1010" stroke-width="0.8"/></svg>
<svg class="a" style="left:277px;top:340px" width="22" height="18" viewBox="0 0 22 18" fill="none" stroke="#b4b4b4"><path d="M5 3 V13" stroke-width="1.6"/><ellipse cx="3.2" cy="13" rx="2.4" ry="1.8" fill="#b4b4b4" stroke="none"/><path d="M5 3 L8 5" stroke-width="1.6"/><path d="M9 7V12M11 3V16M13 6V13M15 1V17M17 6V12M19 8V11M21 9V10" stroke-width="1.5"/></svg>
<svg class="a" style="left:319px;top:340px" width="20" height="18" viewBox="0 0 20 18"><rect x="1" y="4" width="17" height="11" rx="1" fill="#8a8a8a" stroke="#b0b0b0"/><path d="M2 6h15M2 13h15" stroke="#444" stroke-width="1.6" stroke-dasharray="1.5 1.2"/><path d="M9 15 Q6 13 9 9 Q13 5 11 2 Q9 3 10 8 L11 16" fill="none" stroke="#ddd" stroke-width="1.5"/></svg>
<div class="a" style="left:358px;top:343px;width:13px;height:13px;border-radius:50%;background:radial-gradient(circle at 40% 35%,#aaa,#666)"></div>
<svg class="a" style="left:791px;top:341px" width="15" height="15" viewBox="0 0 15 15" fill="none" stroke="#c8c8c8"><circle cx="6" cy="6" r="4.6" stroke-width="1.6"/><path d="M9.5 9.5 L13.5 13.5" stroke-width="2.2"/><path d="M3.8 6h4.4" stroke-width="1.5"/></svg>
<div class="a" style="left:815px;top:347px;width:55px;height:2px;background:#565656;border-radius:1px"></div>
<div class="a" style="left:845px;top:343px;width:11px;height:11px;border-radius:50%;background:radial-gradient(circle at 40% 35%,#fff,#a8a8a8)"></div>
<svg class="a" style="left:878px;top:341px" width="15" height="15" viewBox="0 0 15 15" fill="none" stroke="#c8c8c8"><circle cx="6" cy="6" r="4.6" stroke-width="1.6"/><path d="M9.5 9.5 L13.5 13.5" stroke-width="2.2"/><path d="M3.8 6h4.4M6 3.8v4.4" stroke-width="1.5"/></svg>
<svg class="a" style="left:905px;top:342px" width="14" height="12" viewBox="0 0 14 12" fill="none" stroke="#d0d0d0"><rect x="1" y="1" width="12" height="10" rx="2" stroke-width="1.5"/><path d="M3.5 6h7" stroke-width="1.3"/><path d="M5 4.5 L3.5 6 L5 7.5M9 4.5 L10.5 6 L9 7.5" stroke-width="1"/></svg>
<svg class="a" style="left:931px;top:341px" width="14" height="14" viewBox="0 0 14 14"><circle cx="7" cy="7" r="6.3" fill="#8e8e8e"/><path d="M7 7 V1 A6 6 0 0 0 1.8 10 Z" fill="#c8c8c8"/><path d="M7 2.5V7L10 9.5" stroke="#333" stroke-width="1.2" fill="none"/></svg>
<div class="a" style="left:951px;top:340.5px;width:55px;height:16px;background:#212121;border:1px solid #3a3a3a;border-radius:4px"></div>
<div class="a nw" style="left:957.5px;top:340.5px;font-size:13.3px;line-height:15px;color:#c8c8c8;font-family:'Liberation Mono',monospace;letter-spacing:-1.8px">0:00:08</div>
<div class="a" style="left:0;top:361px;width:1000px;height:19px;background:#2b2b2b"></div>
<div class="a" style="left:0;top:380px;width:1000px;height:7px;background:#1f1f1f"></div>
<div class="a" style="left:69px;top:379px;width:931px;height:1px;background:#777"></div>
<div class="a" style="left:68.0px;top:370px;width:1px;height:9px;background:#6e6e6e"></div><div class="a" style="left:113.6px;top:372px;width:1px;height:7px;background:#666"></div><div class="a nw" style="left:69.2px;top:362px;font-size:7.5px;line-height:10px;color:#9a9a9a;font-family:'Liberation Mono',monospace;letter-spacing:-0.65px">00:00:00:00</div>
<div class="a" style="left:159.1px;top:370px;width:1px;height:9px;background:#6e6e6e"></div><div class="a" style="left:204.7px;top:372px;width:1px;height:7px;background:#666"></div><div class="a nw" style="left:160.3px;top:362px;font-size:7.5px;line-height:10px;color:#9a9a9a;font-family:'Liberation Mono',monospace;letter-spacing:-0.65px">00:00:02:00</div>
<div class="a" style="left:250.2px;top:370px;width:1px;height:9px;background:#6e6e6e"></div><div class="a" style="left:295.8px;top:372px;width:1px;height:7px;background:#666"></div><div class="a nw" style="left:251.4px;top:362px;font-size:7.5px;line-height:10px;color:#9a9a9a;font-family:'Liberation Mono',monospace;letter-spacing:-0.65px">00:00:04:00</div>
<div class="a" style="left:341.4px;top:370px;width:1px;height:9px;background:#6e6e6e"></div><div class="a" style="left:387.0px;top:372px;width:1px;height:7px;background:#666"></div><div class="a nw" style="left:342.6px;top:362px;font-size:7.5px;line-height:10px;color:#9a9a9a;font-family:'Liberation Mono',monospace;letter-spacing:-0.65px">00:00:06:00</div>
<div class="a" style="left:432.5px;top:370px;width:1px;height:9px;background:#6e6e6e"></div><div class="a" style="left:478.1px;top:372px;width:1px;height:7px;background:#666"></div><div class="a nw" style="left:433.7px;top:362px;font-size:7.5px;line-height:10px;color:#9a9a9a;font-family:'Liberation Mono',monospace;letter-spacing:-0.65px">00:00:08:00</div>
<div class="a" style="left:523.6px;top:370px;width:1px;height:9px;background:#6e6e6e"></div><div class="a" style="left:569.2px;top:372px;width:1px;height:7px;background:#666"></div><div class="a nw" style="left:524.8px;top:362px;font-size:7.5px;line-height:10px;color:#9a9a9a;font-family:'Liberation Mono',monospace;letter-spacing:-0.65px">00:00:10:00</div>
<div class="a" style="left:614.7px;top:370px;width:1px;height:9px;background:#6e6e6e"></div><div class="a" style="left:660.3px;top:372px;width:1px;height:7px;background:#666"></div><div class="a nw" style="left:615.9px;top:362px;font-size:7.5px;line-height:10px;color:#9a9a9a;font-family:'Liberation Mono',monospace;letter-spacing:-0.65px">00:00:12:00</div>
<div class="a" style="left:705.8px;top:370px;width:1px;height:9px;background:#6e6e6e"></div><div class="a" style="left:751.4px;top:372px;width:1px;height:7px;background:#666"></div><div class="a nw" style="left:707.0px;top:362px;font-size:7.5px;line-height:10px;color:#9a9a9a;font-family:'Liberation Mono',monospace;letter-spacing:-0.65px">00:00:14:00</div>
<div class="a" style="left:797.0px;top:370px;width:1px;height:9px;background:#6e6e6e"></div><div class="a" style="left:842.6px;top:372px;width:1px;height:7px;background:#666"></div><div class="a nw" style="left:798.2px;top:362px;font-size:7.5px;line-height:10px;color:#9a9a9a;font-family:'Liberation Mono',monospace;letter-spacing:-0.65px">00:00:16:00</div>
<div class="a" style="left:888.1px;top:370px;width:1px;height:9px;background:#6e6e6e"></div><div class="a" style="left:933.7px;top:372px;width:1px;height:7px;background:#666"></div><div class="a nw" style="left:889.3px;top:362px;font-size:7.5px;line-height:10px;color:#9a9a9a;font-family:'Liberation Mono',monospace;letter-spacing:-0.65px">00:00:18:00</div>
<div class="a" style="left:979.2px;top:370px;width:1px;height:9px;background:#6e6e6e"></div><div class="a nw" style="left:980.4px;top:362px;font-size:7.5px;line-height:10px;color:#9a9a9a;font-family:'Liberation Mono',monospace;letter-spacing:-0.65px">00:00:20:00</div>
<div class="a" style="left:369px;top:364px;width:1px;height:16px;background:#e0e0e0"></div>
<div class="a" style="left:528px;top:364px;width:1px;height:16px;background:#e0e0e0"></div>
<svg class="a" style="left:18px;top:366px" width="17" height="12" viewBox="0 0 17 12"><rect x="0.5" y="0.5" width="16" height="11" rx="1" fill="#a8a8a8"/><path d="M1 4H16M1 8H16" stroke="#2b2b2b" stroke-width="1"/><path d="M4.5 1V11M12.5 1V11" stroke="#2b2b2b" stroke-width="1"/><rect x="13" y="1" width="3" height="10" fill="#6a6a6a" opacity=".6"/></svg>
<svg class="a" style="left:41px;top:366px" width="17" height="12" viewBox="0 0 17 12"><rect x="0.5" y="0.5" width="16" height="11" rx="1" fill="#a8a8a8"/><path d="M1 4H16M1 8H16" stroke="#2b2b2b" stroke-width="1"/><path d="M4.5 1V11M12.5 1V11" stroke="#2b2b2b" stroke-width="1"/><rect x="13" y="1" width="3" height="10" fill="#6a6a6a" opacity=".6"/></svg>
<svg class="a" style="left:63px;top:364px" width="12" height="11" viewBox="0 0 12 11"><path d="M1 1 H11 V5 L6 10 L1 5 Z" fill="#e8e8e8" stroke="#888" stroke-width="0.6"/></svg>
<div class="a" style="left:0;top:380px;width:36px;height:155px;background:#272727"></div>
<div class="a" style="left:36px;top:380px;width:31px;height:155px;background:#333"></div>
<div class="a" style="left:69px;top:387px;width:931px;height:148px;background:#1d1d1d"></div>
<div class="a" style="left:36px;top:386px;width:964px;height:1px;background:#101010"></div><div class="a" style="left:69px;top:387px;width:931px;height:1px;background:#262626"></div>
<div class="a" style="left:36px;top:428px;width:964px;height:1px;background:#101010"></div><div class="a" style="left:69px;top:429px;width:931px;height:1px;background:#262626"></div>
<div class="a" style="left:36px;top:469px;width:964px;height:1px;background:#101010"></div><div class="a" style="left:69px;top:470px;width:931px;height:1px;background:#262626"></div>
<div class="a" style="left:36px;top:491px;width:964px;height:1px;background:#101010"></div><div class="a" style="left:69px;top:492px;width:931px;height:1px;background:#262626"></div>
<div class="a" style="left:36px;top:512px;width:964px;height:1px;background:#101010"></div><div class="a" style="left:69px;top:513px;width:931px;height:1px;background:#262626"></div>
<div class="a" style="left:36px;top:533px;width:964px;height:1px;background:#101010"></div><div class="a" style="left:69px;top:534px;width:931px;height:1px;background:#262626"></div>
<div class="a" style="left:67.5px;top:388px;width:2px;height:147px;background:linear-gradient(90deg,#86a6dc 0 50%,#3c5684 50% 100%)"></div>
<div class="a nw" style="left:38px;top:378px;font-size:9px;line-height:10px;color:#c8c8c8;font-weight:bold;letter-spacing:0.5px">+/&#8722; <span style="font-size:6px">&#9660;</span></div>
<div class="a" style="left:720px;top:469px;width:280px;height:2px;background:#1d1d1d"></div><div class="a" style="left:700px;top:491px;width:300px;height:2px;background:#1d1d1d"></div><div class="a" style="left:700px;top:512px;width:300px;height:2px;background:#1d1d1d"></div><div class="a" style="left:712px;top:533px;width:288px;height:2px;background:#1d1d1d"></div><div class="a" style="left:768px;top:442px;width:216px;height:1px;background:#111"></div><div class="a" style="left:768px;top:443px;width:216px;height:1px;background:#252525"></div><div class="a" style="left:968px;top:453px;width:32px;height:1px;background:#111"></div><div class="a" style="left:968px;top:454px;width:32px;height:1px;background:#252525"></div><div class="a" style="left:720px;top:480px;width:148px;height:1px;background:#111"></div><div class="a" style="left:720px;top:481px;width:148px;height:1px;background:#252525"></div><div class="a" style="left:864px;top:493px;width:136px;height:1px;background:#111"></div><div class="a" style="left:864px;top:494px;width:136px;height:1px;background:#252525"></div><div class="a" style="left:700px;top:502px;width:148px;height:1px;background:#111"></div><div class="a" style="left:700px;top:503px;width:148px;height:1px;background:#252525"></div><div class="a" style="left:905px;top:514px;width:95px;height:1px;background:#111"></div><div class="a" style="left:905px;top:515px;width:95px;height:1px;background:#252525"></div><div class="a" style="left:700px;top:523px;width:205px;height:1px;background:#111"></div><div class="a" style="left:700px;top:524px;width:205px;height:1px;background:#252525"></div>
<svg class="a" style="left:43px;top:399px" width="17" height="17" viewBox="0 0 17 17"><circle cx="8.5" cy="8.5" r="7.8" fill="#c4c4c4"/><circle cx="8.5" cy="8.5" r="1.3" fill="#363636"/><circle cx="8.5" cy="4" r="2" fill="#363636"/><circle cx="4.2" cy="7.2" r="2" fill="#363636"/><circle cx="12.8" cy="7.2" r="2" fill="#363636"/><circle cx="5.8" cy="12.3" r="2" fill="#363636"/><circle cx="11.2" cy="12.3" r="2" fill="#363636"/></svg>
<svg class="a" style="left:43px;top:440px" width="17" height="17" viewBox="0 0 17 17"><circle cx="8.5" cy="8.5" r="7.8" fill="#c4c4c4"/><circle cx="8.5" cy="8.5" r="1.3" fill="#363636"/><circle cx="8.5" cy="4" r="2" fill="#363636"/><circle cx="4.2" cy="7.2" r="2" fill="#363636"/><circle cx="12.8" cy="7.2" r="2" fill="#363636"/><circle cx="5.8" cy="12.3" r="2" fill="#363636"/><circle cx="11.2" cy="12.3" r="2" fill="#363636"/></svg>
<div class="a" style="left:40px;top:452px;width:1px;height:4px;background:#aaa"></div>
<div class="a nw" style="left:46px;top:473px;width:11px;text-align:center;font-size:13px;font-weight:bold;font-family:'Liberation Serif',serif;color:#c2c2c2;line-height:14px">T</div><div class="a" style="left:44.5px;top:481px;width:1px;height:4px;background:#b0b0b0"></div>
<svg class="a" style="left:47px;top:498.5px" width="10.5" height="10.5" viewBox="0 0 13 13"><circle cx="4.5" cy="4.5" r="3.8" fill="#b8b8b8"/><path d="M6.5 6.5 L11 11" stroke="#b8b8b8" stroke-width="3" stroke-linecap="round"/></svg>
<svg class="a" style="left:44px;top:517.5px" width="13.5" height="11.5" viewBox="0 0 15 13" fill="none" stroke="#c4c4c4" stroke-width="1.5"><path d="M1 9V12M5.5 10.5 V2.5 H12 V9.5"/><ellipse cx="10.5" cy="10" rx="2" ry="1.5" fill="#c4c4c4" stroke="none"/></svg>
<svg class="a" style="left:13px;top:397px" width="20" height="12" viewBox="0 0 20 12" fill="none" stroke="#bdbdbd" stroke-width="1.4"><rect x="1" y="5.5" width="6" height="5" fill="#bdbdbd" stroke="none"/><path d="M2.5 5.5V3.5a2 2 0 0 1 4 0"/><path d="M10 2.5h8M10 6h8M10 9.5h8" stroke-width="1.6"/></svg>
<div class="a" style="left:18.5px;top:421px;width:0;height:0;border-left:4px solid transparent;border-right:4px solid transparent;border-top:5px solid #d8d8d8"></div>
<svg class="a" style="left:17px;top:443px" width="10" height="10" viewBox="0 0 10 10" fill="none" stroke="#505050" stroke-width="1.2"><rect x="3" y="5" width="6" height="4.5" fill="#505050" stroke="none"/><path d="M1.5 5V3a1.8 1.8 0 0 1 3.6 0V5"/></svg>
<svg class="a" style="left:17px;top:474px" width="10" height="10" viewBox="0 0 10 10" fill="none" stroke="#505050" stroke-width="1.2"><rect x="3" y="5" width="6" height="4.5" fill="#505050" stroke="none"/><path d="M1.5 5V3a1.8 1.8 0 0 1 3.6 0V5"/></svg>
<svg class="a" style="left:17px;top:495px" width="10" height="10" viewBox="0 0 10 10" fill="none" stroke="#505050" stroke-width="1.2"><rect x="3" y="5" width="6" height="4.5" fill="#505050" stroke="none"/><path d="M1.5 5V3a1.8 1.8 0 0 1 3.6 0V5"/></svg>
<svg class="a" style="left:17px;top:516px" width="10" height="10" viewBox="0 0 10 10" fill="none" stroke="#505050" stroke-width="1.2"><rect x="3" y="5" width="6" height="4.5" fill="#505050" stroke="none"/><path d="M1.5 5V3a1.8 1.8 0 0 1 3.6 0V5"/></svg>
<div class="a" style="left:69px;top:493px;width:386px;height:19px;background:#78006e;border-top:1px solid #e2866a;border-bottom:1px solid #e2866a"></div>
<div class="a" style="left:69px;top:492.5px;width:4.5px;height:20px;background:#ff9c14;border-radius:3px 0 0 3px"></div><div class="a" style="left:451px;top:492.5px;width:5.5px;height:20px;background:#ff9c14;border-radius:0 3px 3px 0"></div>
<svg class="a" style="left:76px;top:498px" width="8" height="8" viewBox="0 0 8 8"><circle cx="2.5" cy="2.5" r="2" fill="#fff"/><path d="M3.5 3.5L7 7" stroke="#fff" stroke-width="1.6"/></svg>
<div class="a nw" style="left:87px;top:495px;font-size:11.2px;line-height:15px;color:#fff">坐在矿车上的国家.mp3</div>
<div class="a" style="left:0;top:535px;width:1000px;height:12px;background:#272727"></div>
<div class="a" style="left:0;top:547px;width:1000px;height:1px;background:#111"></div><div class="a" style="left:0;top:548px;width:1000px;height:5px;background:#202020"></div>
<div class="a" style="left:905px;top:536px;width:70px;height:11px;background:#1c1c1c;clip-path:polygon(0 0,100% 0,82% 100%,0 100%)"></div>
<div class="a nw" style="left:26px;top:538px;font-size:5.5px;line-height:10px;color:#ccc;font-weight:bold;letter-spacing:-0.6px">&#9670;&#8230;&#9660;</div>
<div class="a" style="left:51px;top:539.5px;width:0;height:0;border-top:3.5px solid transparent;border-bottom:3.5px solid transparent;border-right:5px solid #7a7a7a"></div>
<div class="a" style="left:66px;top:539.5px;width:0;height:0;border-top:3.5px solid transparent;border-bottom:3.5px solid transparent;border-left:5px solid #7a7a7a"></div>
<style>
#dlg{left:369px;top:194px;width:299px;height:166px;border-radius:6px;border:1px solid #8da2bb;background:linear-gradient(90deg,rgba(0,0,0,0) 0,rgba(0,0,0,0) 88%,rgba(150,130,140,.42) 100%),linear-gradient(#4c5c72 0px,#334258 5px,#222f46 13px,#1b2942 21px,#172848 100%);box-shadow:0 0 0 1px rgba(0,0,0,.45),0 2px 7px rgba(0,0,0,.55)}
#dlg .glow{left:171px;top:4px;width:80px;height:18px;background:linear-gradient(#93a3b7,#8192aa 60%,#76879f);filter:blur(2.2px);opacity:.95}
#dlg .cl{left:4px;top:20px;width:289px;height:140px;background:#f0f0f0;border:1px solid #a9b9cd}
#dlg .ttl{left:6px;top:4px;font-size:9px;line-height:12px;color:#141a26;text-shadow:0 0 3px #9fb4cc,0 0 5px #8aa0bc,0 0 2px #c4d2e2;white-space:nowrap;-webkit-text-stroke:0.3px #141a26}
#dlg .x{left:257px;top:-1px;width:38px;height:15px;border:1px solid rgba(175,195,220,.65);border-top:none;border-radius:0 0 4px 4px;background:linear-gradient(rgba(100,120,150,.55),rgba(44,60,88,.5) 50%,rgba(30,44,70,.6))}
.dt{font-family:"Liberation Mono","Noto Sans CJK SC",monospace;font-size:9px;line-height:12px;color:#0a0a0a;white-space:nowrap;-webkit-text-stroke:0.15px currentColor}
.dt b{font-weight:normal;font-size:8.2px;letter-spacing:-0.45px}
.lb{background:#fff;border:1px solid #8a8f98}
.btn{height:14.5px;border:1px solid #939393;border-radius:2.5px;background:linear-gradient(#f6f6f6 0,#ededed 48%,#e0e0e0 52%,#d4d4d4 100%);box-shadow:inset 0 0 0 1px rgba(255,255,255,.85);text-align:center;line-height:13px}
.btn.dis{border-color:#c0c0c0;background:#f4f4f4;color:#a8a8a8;-webkit-text-stroke:0}
</style>
<div id="dlg" class="a"><div class="a glow"></div><div class="a x"></div><svg class="a" style="left:271px;top:2px" width="10" height="9" viewBox="0 0 10 9"><path d="M1.5 1 L8.5 8 M8.5 1 L1.5 8" stroke="#fff" stroke-width="2.1"/></svg><div class="a ttl">音频滤镜</div><div class="a cl"></div></div>
<div class="a dt" style="left:382px;top:222px">可用滤镜<b>(V):</b></div>
<div class="a dt" style="left:551px;top:222px">已用滤镜<b>(P):</b></div>
<div class="a lb" style="left:382px;top:236px;width:100px;height:76px"></div>
<div class="a dt" style="left:385px;top:239.00px;width:60px;height:10px;line-height:10px;font-size:9.4px">回声</div>
<div class="a dt" style="left:385px;top:248.00px;width:60px;height:10px;line-height:10px;font-size:9.4px">混响</div>
<div class="a dt" style="left:385px;top:257.00px;width:60px;height:10px;line-height:10px;font-size:9.4px">删除噪音</div>
<div class="a dt" style="left:385px;top:266.00px;width:60px;height:10px;line-height:10px;font-size:9.4px">声音降低</div>
<div class="a dt" style="left:385px;top:275.00px;width:60px;height:10px;line-height:10px;font-size:9.4px">嘶声降低</div>
<div class="a dt" style="left:385px;top:284.00px;width:60px;height:10px;line-height:10px;font-size:9.4px">体育场</div>
<div class="a dt" style="left:385px;top:294.00px;width:60px;height:10px;line-height:10px;font-size:9.4px">音量级别</div>
<div class="a dt" style="left:385px;top:303.00px;width:60px;height:10px;line-height:10px;font-size:9.4px">音调偏移</div>
<div class="a" style="left:469px;top:237px;width:12px;height:74px;background:#efefef;border-left:1px solid #e2e2e2"></div>
<div class="a" style="left:472px;top:243px;width:0;height:0;border-left:3px solid transparent;border-right:3px solid transparent;border-bottom:3.5px solid #505050"></div>
<div class="a" style="left:472px;top:302.5px;width:0;height:0;border-left:3px solid transparent;border-right:3px solid transparent;border-top:3.5px solid #505050"></div>
<div class="a" style="left:470px;top:275px;width:10.5px;height:17px;border:1px solid #9a9a9a;border-radius:2px;background:linear-gradient(90deg,#f6f6f6,#dedede)"></div>
<div class="a" style="left:472.5px;top:281px;width:5.5px;height:1px;background:#808080"></div><div class="a" style="left:472.5px;top:283px;width:5.5px;height:1px;background:#808080"></div><div class="a" style="left:472.5px;top:285px;width:5.5px;height:1px;background:#808080"></div>
<div class="a dt btn dis" style="left:488px;top:237px;width:55px">添加<b>(A)&gt;&gt;</b></div>
<div class="a dt btn" style="left:488px;top:260px;width:55px"><b>&lt;&lt;</b>删除<b>(R)</b></div>
<div class="a dt btn" style="left:488px;top:282px;width:55px">全部删除<b>(M)</b></div>
<div class="a dt btn" style="left:488px;top:310px;width:55px">选项<b>(O)...</b></div>
<div class="a lb" style="left:549px;top:235px;width:106px;height:75px"></div>
<div class="a dt" style="left:551px;top:237px"><b>NewBlue</b> 干扰去除器</div>
<div class="a dt" style="left:551px;top:249px"><b>NewBlue</b> 音频润色</div>
<div class="a" style="left:550px;top:261px;width:104px;height:11px;background:#3399ff"></div>
<div class="a dt" style="left:551px;top:260.5px;color:#fff">音调偏移</div>
<div class="a dt btn" style="left:452px;top:335px;width:55px">确定</div>
<div class="a dt btn" style="left:523px;top:335px;width:56px">取消</div>
</body>
</html>
